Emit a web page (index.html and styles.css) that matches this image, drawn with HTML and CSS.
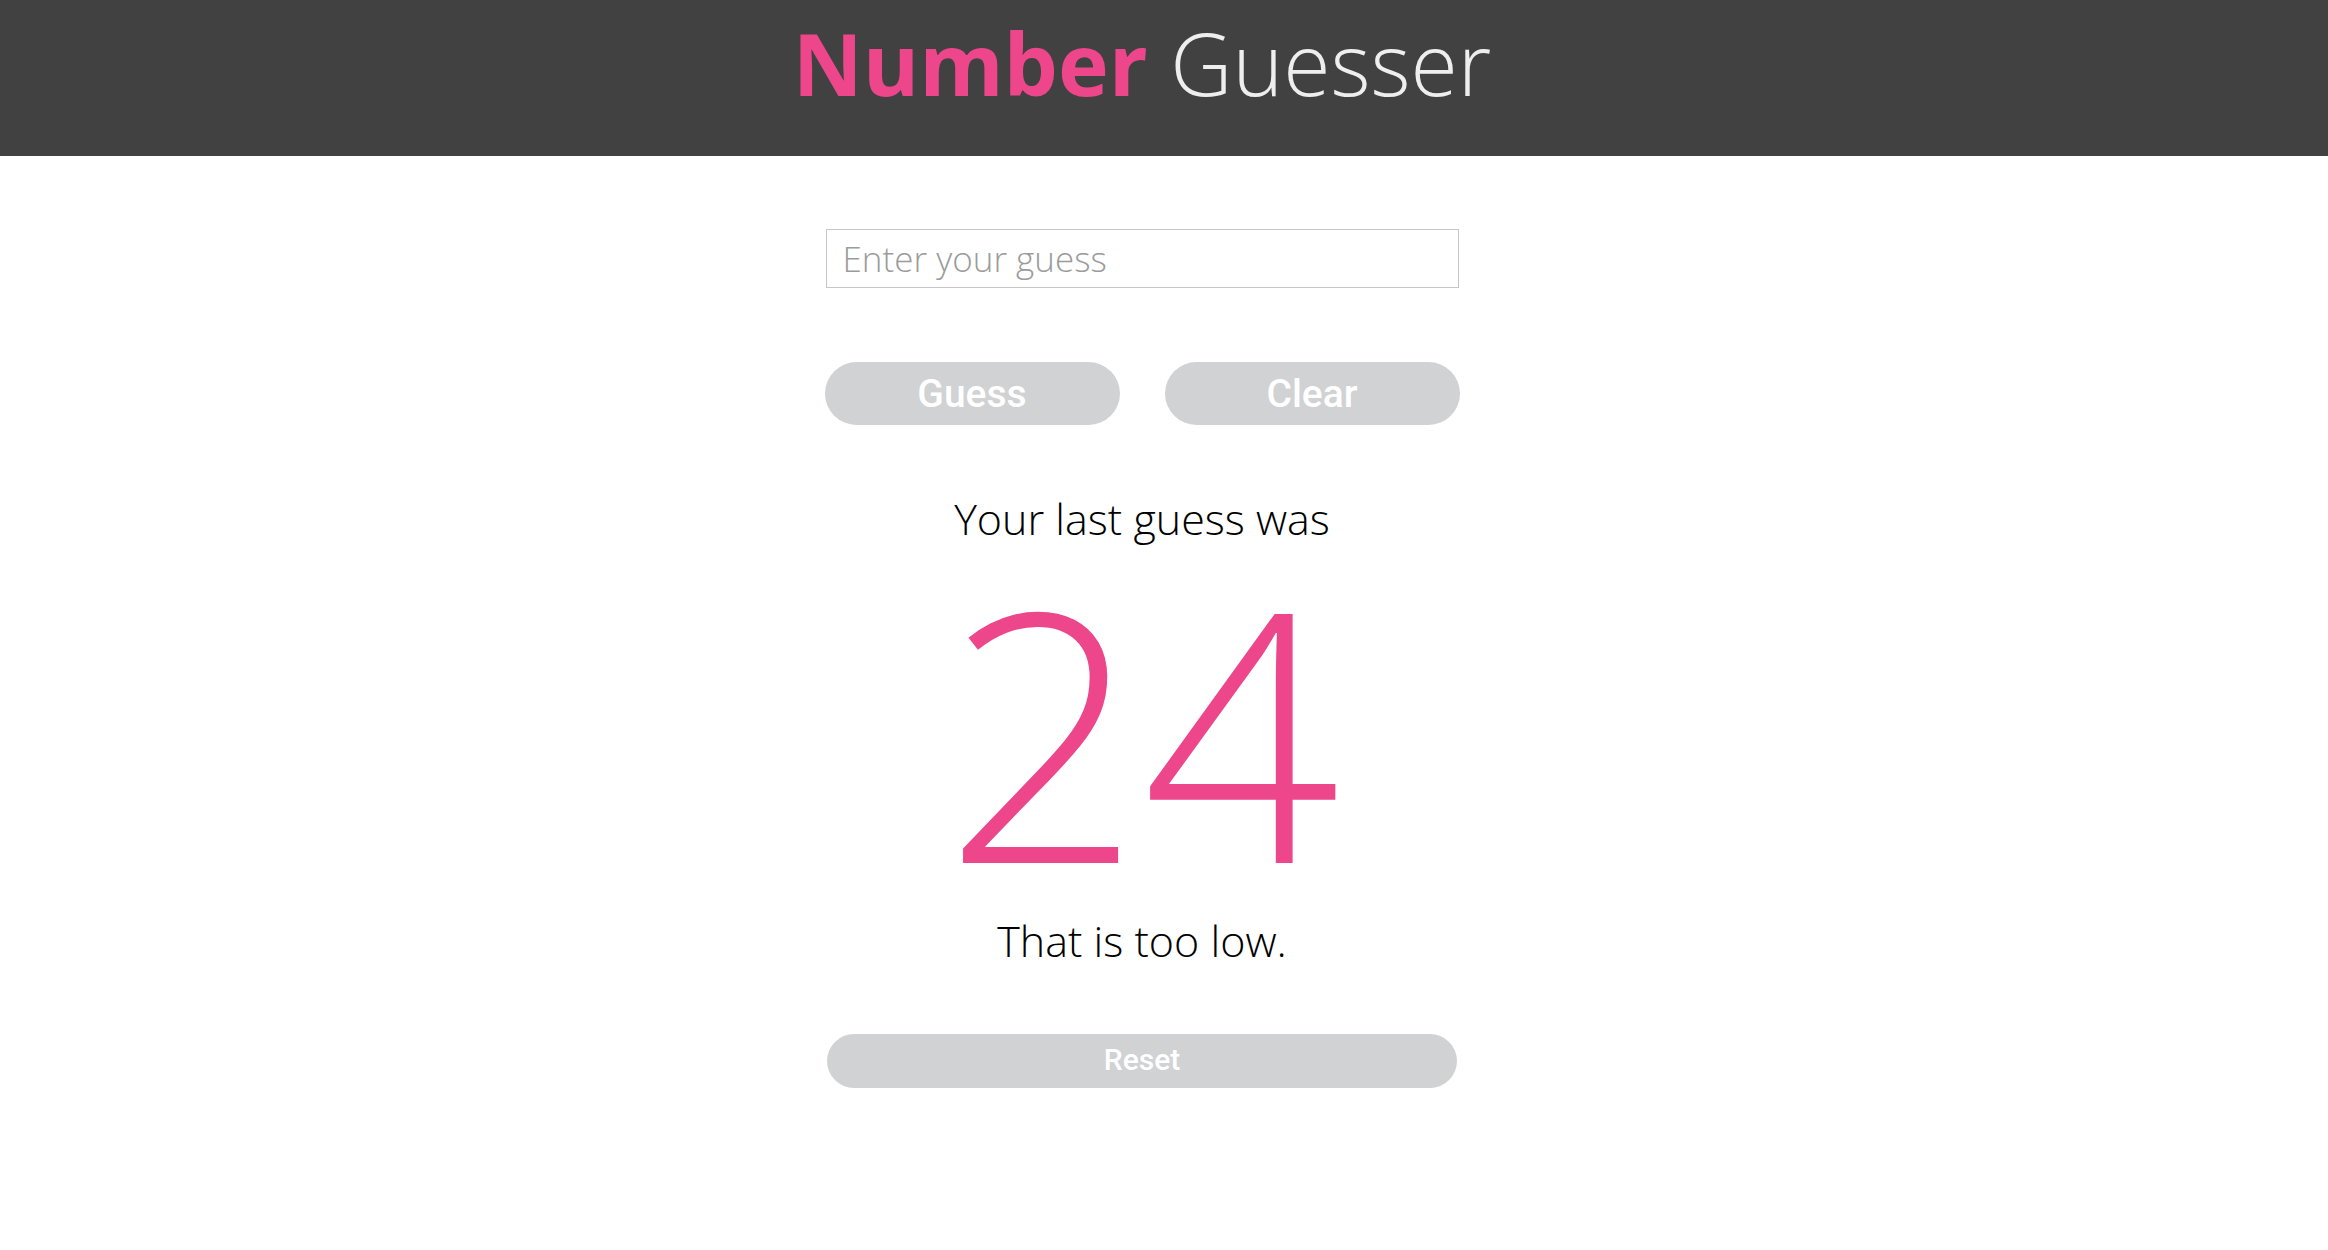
FILE: index.html
```html
<!DOCTYPE html>
<html lang="en">
<head>
<meta charset="utf-8">
<title>Number Guesser</title>
<link rel="stylesheet" href="styles.css">
</head>
<body>
<header class="site-header">
  <h1 class="title"><span class="title-strong">Number</span> <span class="title-light">Guesser</span></h1>
</header>
<main class="game">
  <input class="guess-input" type="text" placeholder="Enter your guess">
  <div class="button-row">
    <button class="pill-btn">Guess</button>
    <button class="pill-btn">Clear</button>
  </div>
  <p class="label">Your last guess was</p>
  <p class="last-guess">24</p>
  <p class="feedback">That is too low.</p>
  <button class="pill-btn reset-btn">Reset</button>
</main>
</body>
</html>
```
FILE: styles.css
```css
html, body {
  margin: 0;
  padding: 0;
  background: #ffffff;
}

body {
  font-family: "Open Sans", "Liberation Sans", sans-serif;
}

.site-header {
  background: #414141;
  height: 156px;
  box-sizing: border-box;
  padding: 20px 44px 0 0;
  text-align: center;
}

.title {
  margin: 0;
  font-size: 86px;
  line-height: 1;
  font-weight: 400;
}

.title-strong {
  color: #ed468b;
  font-weight: 700;
}

.title-light {
  color: #eeeeee;
  font-weight: 300;
}

.game {
  display: flex;
  flex-direction: column;
  align-items: center;
  padding: 73px 44px 0 0;
}

.guess-input {
  box-sizing: border-box;
  width: 633px;
  height: 59px;
  margin: 0;
  padding: 0 16px;
  border: 1px solid #c6c6c6;
  border-radius: 0;
  font-family: "Open Sans", sans-serif;
  font-weight: 300;
  font-size: 35px;
  color: #333;
  outline: none;
}

.guess-input::placeholder {
  color: #9b9b9b;
}

.button-row {
  display: flex;
  gap: 45px;
  margin-top: 74px;
}

.pill-btn {
  box-sizing: border-box;
  width: 295px;
  height: 63px;
  border: none;
  border-radius: 32px;
  background: #d1d2d4;
  color: #ffffff;
  font-family: Roboto, "Liberation Sans", sans-serif;
  font-weight: 500;
  font-size: 39px;
  padding: 0;
  cursor: pointer;
}

.label,
.feedback {
  margin: 0;
  font-size: 43px;
  line-height: 1.2;
  font-weight: 300;
  color: #000000;
}

.label {
  margin-top: 68px;
}

.last-guess {
  margin: 45px 0 0;
  font-size: 347px;
  line-height: 0.8;
  font-weight: 300;
  color: #ed468b;
}

.feedback {
  margin-top: 48px;
}

.reset-btn {
  width: 630px;
  height: 54px;
  margin-top: 67px;
  font-size: 30px;
  line-height: 1;
  padding-bottom: 2px;
  border-radius: 27px;
}
```
